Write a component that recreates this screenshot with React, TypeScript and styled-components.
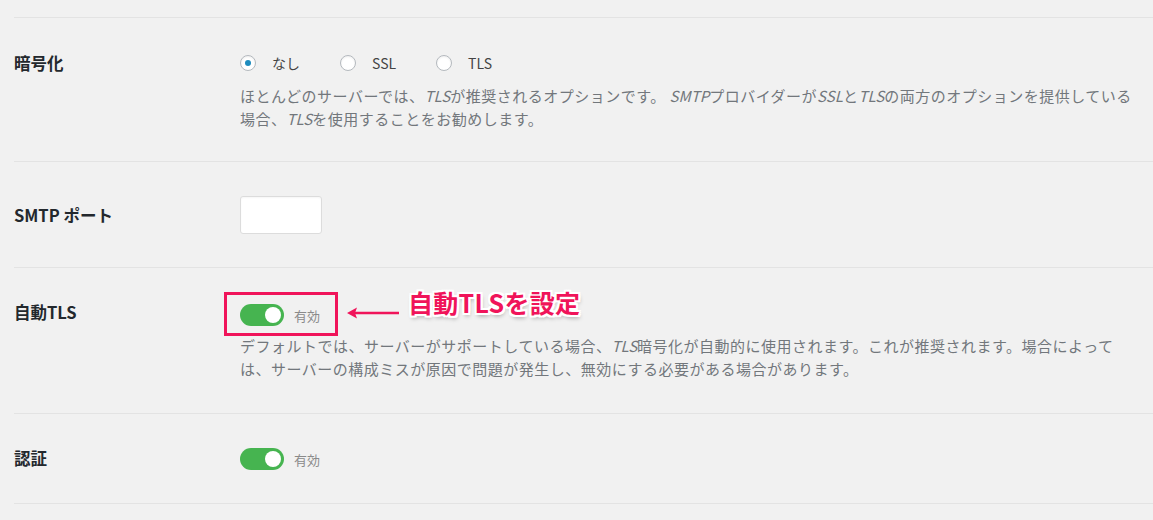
import React from "react";
import styled, { createGlobalStyle } from "styled-components";

const Global = createGlobalStyle`
  html, body { margin: 0; padding: 0; background: #f1f1f1; }
  body { font-family: "Noto Sans CJK JP", "Noto Sans", sans-serif; }
`;

const Page = styled.div`
  width: 1153px;
  height: 520px;
  overflow: hidden;
  background: #f1f1f1;
  padding: 17px 0 0 14px;
  box-sizing: border-box;
`;

const Row = styled.div<{ $pt: number; $pb: number }>`
  display: grid;
  grid-template-columns: 226px 1fr;
  border-top: 1px solid #e3e3e3;
  padding: ${(p) => `${p.$pt}px 0 ${p.$pb}px`};
`;

const LastLine = styled.div`
  border-top: 1px solid #e3e3e3;
`;

const Label = styled.div<{ $mt?: number }>`
  font-size: 16.5px;
  font-weight: 700;
  color: #23282d;
  line-height: 20px;
  margin-top: ${(p) => p.$mt ?? 0}px;
`;

const Content = styled.div`
  display: flex;
  flex-direction: column;
  align-items: flex-start;
`;

const RadioGroup = styled.div`
  display: flex;
  align-items: center;
  height: 20px;
`;

const RadioItem = styled.label`
  display: flex;
  align-items: center;
  margin-right: 40px;
  font-size: 14px;
  color: #444;
`;

const RadioCircle = styled.span<{ $checked?: boolean }>`
  width: 16px;
  height: 16px;
  box-sizing: border-box;
  border-radius: 50%;
  border: 1px solid #b4b9be;
  background: #fff;
  box-shadow: inset 0 1px 2px rgba(0, 0, 0, 0.07);
  display: flex;
  align-items: center;
  justify-content: center;
  margin-right: 16px;
  &::after {
    content: "";
    display: ${(p) => (p.$checked ? "block" : "none")};
    width: 6px;
    height: 6px;
    border-radius: 50%;
    background: #1e8cbe;
  }
`;

const Desc = styled.p<{ $mt: number }>`
  margin: ${(p) => p.$mt}px 0 0;
  width: 895px;
  font-size: 15px;
  letter-spacing: 0.5px;
  line-height: 23px;
  color: #72777c;
  em { font-style: italic; letter-spacing: 0; }
`;

const TextInput = styled.input`
  width: 82px;
  height: 38px;
  box-sizing: border-box;
  border: 1px solid #dcdcdc;
  border-radius: 3px;
  background: #fff;
  box-shadow: inset 0 1px 2px rgba(0, 0, 0, 0.04);
  outline: none;
`;

const ToggleLine = styled.div`
  position: relative;
  display: flex;
  align-items: center;
  height: 22px;
`;

const Switch = styled.span`
  width: 44px;
  height: 22px;
  border-radius: 11px;
  background: #46b450;
  display: flex;
  align-items: center;
  justify-content: flex-end;
  padding-right: 3px;
  box-sizing: border-box;
  &::after {
    content: "";
    width: 16px;
    height: 16px;
    border-radius: 50%;
    background: #fff;
  }
`;

const SwitchText = styled.span`
  margin-left: 10px;
  font-size: 13px;
  color: #8a8a8a;
`;

const Highlight = styled.div`
  position: absolute;
  left: -16px;
  top: -12px;
  width: 114px;
  height: 44px;
  border: 3px solid #f0145a;
  box-sizing: border-box;
`;

const ArrowWrap = styled.div`
  position: absolute;
  left: 106px;
  top: 2px;
  display: flex;
`;

const CalloutText = styled.span`
  position: absolute;
  left: 168px;
  top: -17px;
  line-height: 30px;
  font-size: 25px;
  font-weight: 700;
  color: #f0145a;
  letter-spacing: 0.3px;
  white-space: nowrap;
  text-shadow:
    2px 0 0 #fff, -2px 0 0 #fff, 0 2px 0 #fff, 0 -2px 0 #fff,
    2px 2px 0 #fff, -2px -2px 0 #fff, 2px -2px 0 #fff, -2px 2px 0 #fff,
    1px 3px 4px rgba(0, 0, 0, 0.35);
`;

const Arrow = () => (
  <svg width="54" height="14" viewBox="0 0 54 14">
    <line x1="8" y1="7" x2="53" y2="7" stroke="#f0145a" strokeWidth="2.5" />
    <path d="M1 7 L11 1.5 L9 7 L11 12.5 Z" fill="#f0145a" />
  </svg>
);

export default function App() {
  return (
    <Page>
      <Global />
      <Row $pt={35} $pb={31}>
        <Label>暗号化</Label>
        <Content>
          <RadioGroup>
            <RadioItem>
              <RadioCircle $checked />
              なし
            </RadioItem>
            <RadioItem>
              <RadioCircle />
              SSL
            </RadioItem>
            <RadioItem>
              <RadioCircle />
              TLS
            </RadioItem>
          </RadioGroup>
          <Desc $mt={11}>
            ほとんどのサーバーでは、<em>TLS</em>が推奨されるオプションです。 <em>SMTP</em>プロバイダーが<em>SSL</em>と<em>TLS</em>の両方のオプションを提供している場合、<em>TLS</em>を使用することをお勧めします。
          </Desc>
        </Content>
      </Row>
      <Row $pt={34} $pb={33}>
        <Label $mt={9}>SMTP ポート</Label>
        <Content>
          <TextInput type="text" />
        </Content>
      </Row>
      <Row $pt={36} $pb={33}>
        <Label $mt={-2}>自動TLS</Label>
        <Content>
          <ToggleLine>
            <Switch />
            <SwitchText>有効</SwitchText>
            <Highlight />
            <ArrowWrap>
              <Arrow />
            </ArrowWrap>
            <CalloutText>自動TLSを設定</CalloutText>
          </ToggleLine>
          <Desc $mt={8}>
            デフォルトでは、サーバーがサポートしている場合、<em>TLS</em>暗号化が自動的に使用されます。これが推奨されます。場合によっては、サーバーの構成ミスが原因で問題が発生し、無効にする必要がある場合があります。
          </Desc>
        </Content>
      </Row>
      <Row $pt={34} $pb={33}>
        <Label $mt={0}>認証</Label>
        <Content>
          <ToggleLine>
            <Switch />
            <SwitchText>有効</SwitchText>
          </ToggleLine>
        </Content>
      </Row>
      <LastLine />
    </Page>
  );
}
